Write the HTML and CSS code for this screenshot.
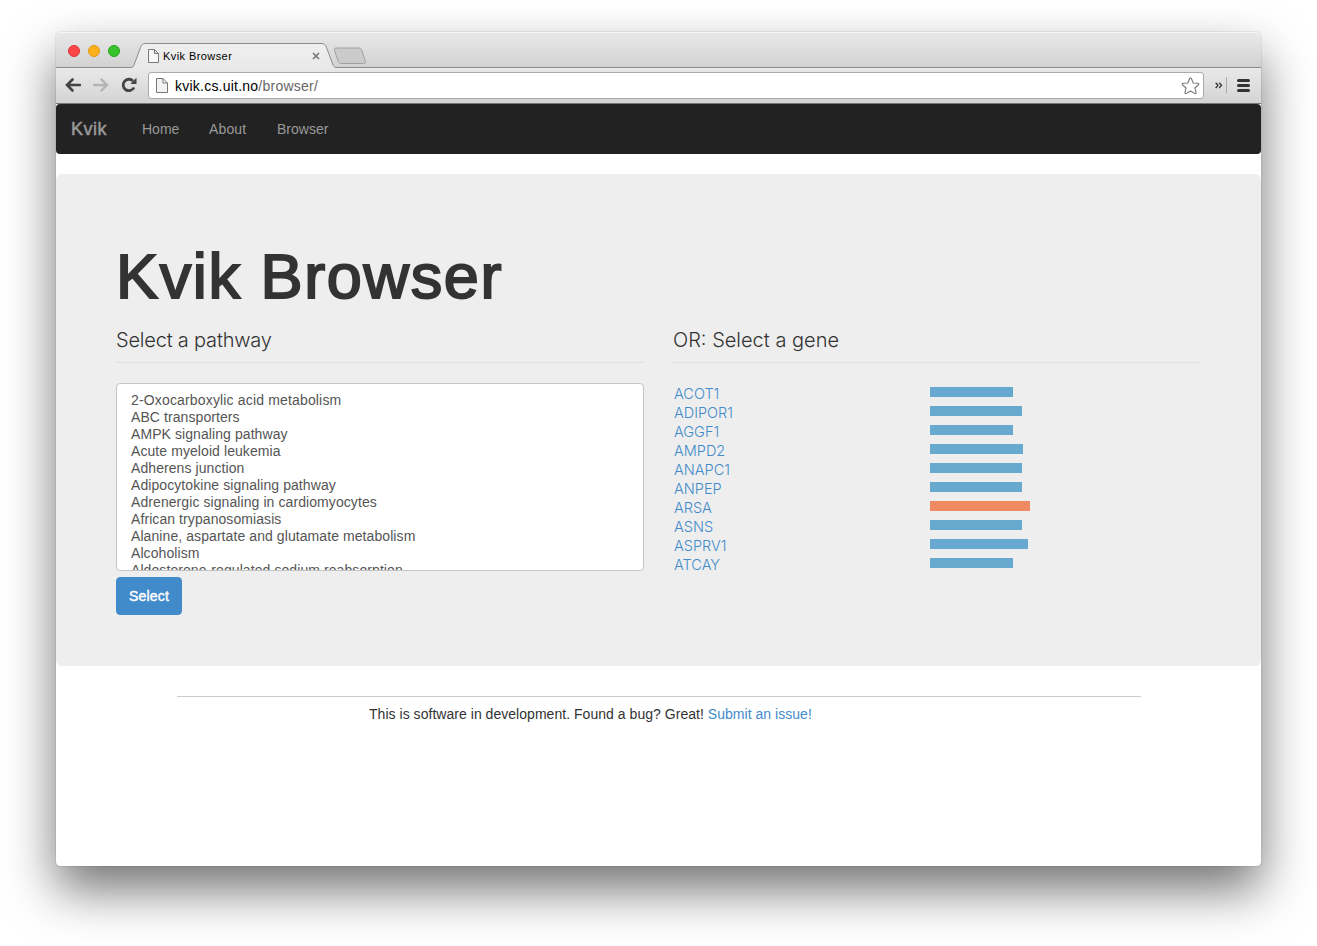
FILE: index.html
```html
<!DOCTYPE html>
<html lang="en">
<head>
<meta charset="utf-8">
<title>Kvik Browser</title>
<link rel="stylesheet" href="styles.css">
</head>
<body>
<div class="window">
  <div class="tabstrip">
    <div class="lights"><i class="light red"></i><i class="light amber"></i><i class="light green"></i></div>
    <div class="tab">
      <svg class="tab-shape" width="208" height="25" viewBox="0 0 208 25">
        <defs><linearGradient id="tabfill" x2="0" y2="1"><stop offset="0" stop-color="#efefef"/><stop offset="1" stop-color="#e9e9e9"/></linearGradient></defs>
        <path d="M0 24.500C3 24.500 3.500 23.500 4 22L10.500 4.500C11.500 1.500 12.500 .5 15.500 .5H191C194 .5 195.500 1.500 196.500 4.500L203 22C204 24 205 24.500 207 24.500V25H0Z" fill="url(#tabfill)"/>
        <path d="M0 24.500C3 24.500 3.500 23.500 4 22L10.500 4.500C11.500 1.500 12.500 .5 15.500 .5H191C194 .5 195.500 1.500 196.500 4.500L203 22C204 24 205 24.500 207 24.500" fill="none" stroke="#8c8c8c"/>
        <path d="M5 24.500H202" stroke="#e9e9e9"/>
      </svg>
      <div class="tab-content">
        <svg width="12" height="14" viewBox="0 0 12 14"><path d="M.5 .5H6.500L10.500 4.500V13.500H.5ZM6.500 .5V4.500H10.500" fill="#f8f8f8" stroke="#777"/></svg>
        <span class="tab-title">Kvik Browser</span>
        <svg class="tab-close" width="8" height="8" viewBox="0 0 8 8"><path d="M1 1L7 7M7 1L1 7" stroke="#777" stroke-width="1.600"/></svg>
      </div>
    </div>
    <svg class="new-tab" width="34" height="18" viewBox="0 0 34 18"><path d="M3 1H25C27 1 28 1.500 28.700 3L32.300 14C32.800 15.500 32 16.500 30.500 16.500H9C7 16.500 6 16 5.300 14.500L1.500 3.500C1 2 1.500 1 3 1Z" fill="#cbcbcb" stroke="#a0a0a0"/></svg>
  </div>
  <div class="toolbar">
    <svg class="back" width="16" height="14" viewBox="0 0 16 14"><path d="M7.500 1.500L2 7L7.500 12.500M2 7H15" fill="none" stroke="#444" stroke-width="2.600" stroke-linecap="round"/></svg>
    <svg class="forward" width="16" height="14" viewBox="0 0 16 14"><path d="M8.500 1.500L14 7L8.500 12.500M14 7H1" fill="none" stroke="#b4b4b4" stroke-width="2.400" stroke-linecap="round"/></svg>
    <svg class="reload" width="16" height="16" viewBox="0 0 16 16"><path d="M12 4A5.700 5.700 0 1 0 13 10.500" fill="none" stroke="#444" stroke-width="2.800"/><path d="M15.500 .8V7H9.300Z" fill="#444"/></svg>
    <div class="address">
      <svg width="12" height="15" viewBox="0 0 12 15"><path d="M.5 .5H7L11.500 5V14.500H.5ZM7 .5V5H11.500" fill="#f3f3f3" stroke="#777"/></svg>
      <span class="url"><b>kvik.cs.uit.no</b>/browser/</span>
      <svg class="star" width="19" height="18" viewBox="0 0 19 18"><path d="M9.500 1C10 1 10.300 1.300 10.500 1.800L12.200 6L16.800 6.300C18 6.400 18.200 7.300 17.300 8L13.900 11L15 15.300C15.300 16.500 14.500 17 13.500 16.400L9.500 14L5.500 16.400C4.500 17 3.700 16.500 4 15.300L5.100 11L1.700 8C.8 7.300 1 6.400 2.200 6.300L6.800 6L8.500 1.800C8.700 1.300 9 1 9.500 1Z" fill="#fff" stroke="#777" stroke-width="1.100"/></svg>
    </div>
    <svg class="more" width="8" height="7" viewBox="0 0 8 7"><path d="M.7 .7L3 3.300L.7 6M4.200 .7L6.500 3.300L4.200 6" fill="none" stroke="#333" stroke-width="1.300"/></svg>
    <i class="separator"></i>
    <svg class="menu" width="13" height="13" viewBox="0 0 13 13"><path d="M1.500 1.500H11.500M1.500 6.500H11.500M1.500 11.500H11.500" stroke="#333" stroke-width="3" stroke-linecap="round"/></svg>
  </div>
  <nav class="navbar">
    <a class="brand">Kvik</a><a class="n1">Home</a><a class="n2">About</a><a class="n3">Browser</a>
  </nav>
  <main class="jumbotron">
    <h1>Kvik Browser</h1>
    <div class="row">
      <section>
        <h2 class="h-path">Select a pathway</h2>
        <div class="listbox">
          <div class="wide">2-Oxocarboxylic acid metabolism</div>
          <div>ABC transporters</div>
          <div>AMPK signaling pathway</div>
          <div>Acute myeloid leukemia</div>
          <div>Adherens junction</div>
          <div>Adipocytokine signaling pathway</div>
          <div>Adrenergic signaling in cardiomyocytes</div>
          <div>African trypanosomiasis</div>
          <div>Alanine, aspartate and glutamate metabolism</div>
          <div>Alcoholism</div>
          <div>Aldosterone-regulated sodium reabsorption</div>
        </div>
        <button class="select">Select</button>
      </section>
      <section>
        <h2>OR: Select a gene</h2>
        <div class="genes">
          <div class="gene"><a>ACOT1</a><i style="width:83.300px"></i></div>
          <div class="gene"><a>ADIPOR1</a><i style="width:92px"></i></div>
          <div class="gene"><a>AGGF1</a><i style="width:83.300px"></i></div>
          <div class="gene"><a>AMPD2</a><i style="width:93px"></i></div>
          <div class="gene"><a>ANAPC1</a><i style="width:91.700px"></i></div>
          <div class="gene"><a>ANPEP</a><i style="width:91.700px"></i></div>
          <div class="gene up"><a>ARSA</a><i style="width:99.700px"></i></div>
          <div class="gene"><a>ASNS</a><i style="width:91.700px"></i></div>
          <div class="gene"><a>ASPRV1</a><i style="width:98px"></i></div>
          <div class="gene"><a>ATCAY</a><i style="width:83.300px"></i></div>
        </div>
      </section>
    </div>
  </main>
  <footer>This is software in development. Found a bug? Great! <a>Submit an issue!</a></footer>
</div>
</body>
</html>
```
FILE: styles.css
```css
* { box-sizing: border-box; }
html, body { margin: 0; height: 946px; overflow: hidden; background: #fff; }
body {
  padding: 32px 56px 0;
  font: 14px/20px "Liberation Sans", Arial, sans-serif;
  color: #333;
}
svg { display: block; flex: none; }
.window {
  width: 1205px;
  height: 834px;
  border-radius: 5px 5px 4px 4px;
  background: #fff;
  box-shadow: 0 0 1px rgba(0,0,0,.6), 0 24px 50px rgba(0,0,0,.55);
}
.tabstrip {
  display: flex;
  height: 36px;
  padding-left: 12px;
  border-bottom: 1px solid #8c8c8c;
  border-radius: 5px 5px 0 0;
  background: linear-gradient(#e9e9e9, #d2d2d2);
  box-shadow: inset 0 1px #f5f5f5;
}
.lights { display: flex; gap: 8px; padding-top: 13px; width: 62px; }
.light { width: 12px; height: 12px; border-radius: 50%; border: 1px solid; }
.red { background: #fc4648; border-color: #dc3538; }
.amber { background: #fdb01c; border-color: #df9a14; }
.green { background: #38c42b; border-color: #27a51d; }
.tab { display: grid; width: 204px; height: 25px; margin-top: 11px; }
.tab-shape { grid-area: 1/1; }
.tab-content { grid-area: 1/1; display: flex; align-items: center; padding-left: 18px; }
.tab-title { width: 149px; margin-left: 3px; font-size: 11px; color: #000; letter-spacing: .42px; }
.new-tab { margin: 15px 0 0 -1px; }
.toolbar {
  display: flex;
  align-items: center;
  height: 36px;
  padding: 0 0 1px 9px;
  border-bottom: 1px solid #777;
  background: linear-gradient(#e9e9e9, #d4d4d4);
}
.forward { margin-left: 12px; }
.reload { margin-left: 12px; }
.address {
  display: flex;
  align-items: center;
  width: 1056px;
  height: 27px;
  margin: 1px 0 0 11px;
  padding-left: 7px;
  border: 1px solid #aaa;
  border-radius: 3px;
  background: #fff;
}
.url { margin-left: 7px; width: 1006px; color: #666; letter-spacing: .23px; }
.url b { font-weight: 400; color: #000; }
.more { margin-left: 11px; }
.separator { width: 1px; height: 16px; margin-left: 3px; background: #aaa; }
.menu { margin-left: 10px; }
.navbar {
  display: flex;
  height: 50px;
  padding: 0 15px;
  border-radius: 4px;
  background: #222;
  color: #999;
  line-height: 50px;
}
.brand { width: 71px; font-size: 18px; line-height: 51px; letter-spacing: .5px; -webkit-text-stroke: .5px #999; }
.n1 { width: 67px; }
.n2 { width: 68px; letter-spacing: .15px; }
.jumbotron {
  height: 492px;
  margin-top: 20px;
  padding: 71px 60px 0;
  border-radius: 6px;
  background: #eee;
}
h1 { margin: 0; height: 64px; font-size: 63px; line-height: 63px; font-weight: 400; letter-spacing: 1.620px; -webkit-text-stroke: 2px #333; }
.row { display: grid; grid-template-columns: 528px 528px; gap: 29px; margin-top: 18px; }
h2 {
  margin: 0 0 20px;
  height: 36px;
  border-bottom: 1px solid #e1e1e1;
  font: 300 20px/26px Inter, sans-serif;
}
.h-path { letter-spacing: -.2px; }
.listbox {
  height: 188px;
  padding: 8px 14px 0;
  overflow: hidden;
  border: 1px solid #c4c4c4;
  border-radius: 4px;
  background: #fff;
  color: #555;
  line-height: 17px;
  letter-spacing: .08px;
}
.wide { letter-spacing: .16px; }
.select {
  display: block;
  width: 66px;
  height: 38px;
  margin-top: 6px;
  padding: 0;
  border: 1px solid #428bca;
  border-radius: 4px;
  background: #428bca;
  color: #fff;
  font: inherit;
  letter-spacing: .2px;
  -webkit-text-stroke: .4px #fff;
}
.genes { padding-top: 1px; }
.gene { display: grid; grid-template-columns: 256px auto; height: 19px; padding-left: 1px; font: 300 14.500px/19px Inter, sans-serif; }
.gene i { height: 10px; margin-top: 3px; background: #67a9cf; }
.gene.up i { background: #ef8a62; }
.gene a { color: #428bca; }
footer {
  width: 964px;
  margin: 30px 0 0 121px;
  padding: 7px 0 0 192px;
  border-top: 1px solid #ccc;
  letter-spacing: .035px;
}
footer a { color: #428bca; }
```
